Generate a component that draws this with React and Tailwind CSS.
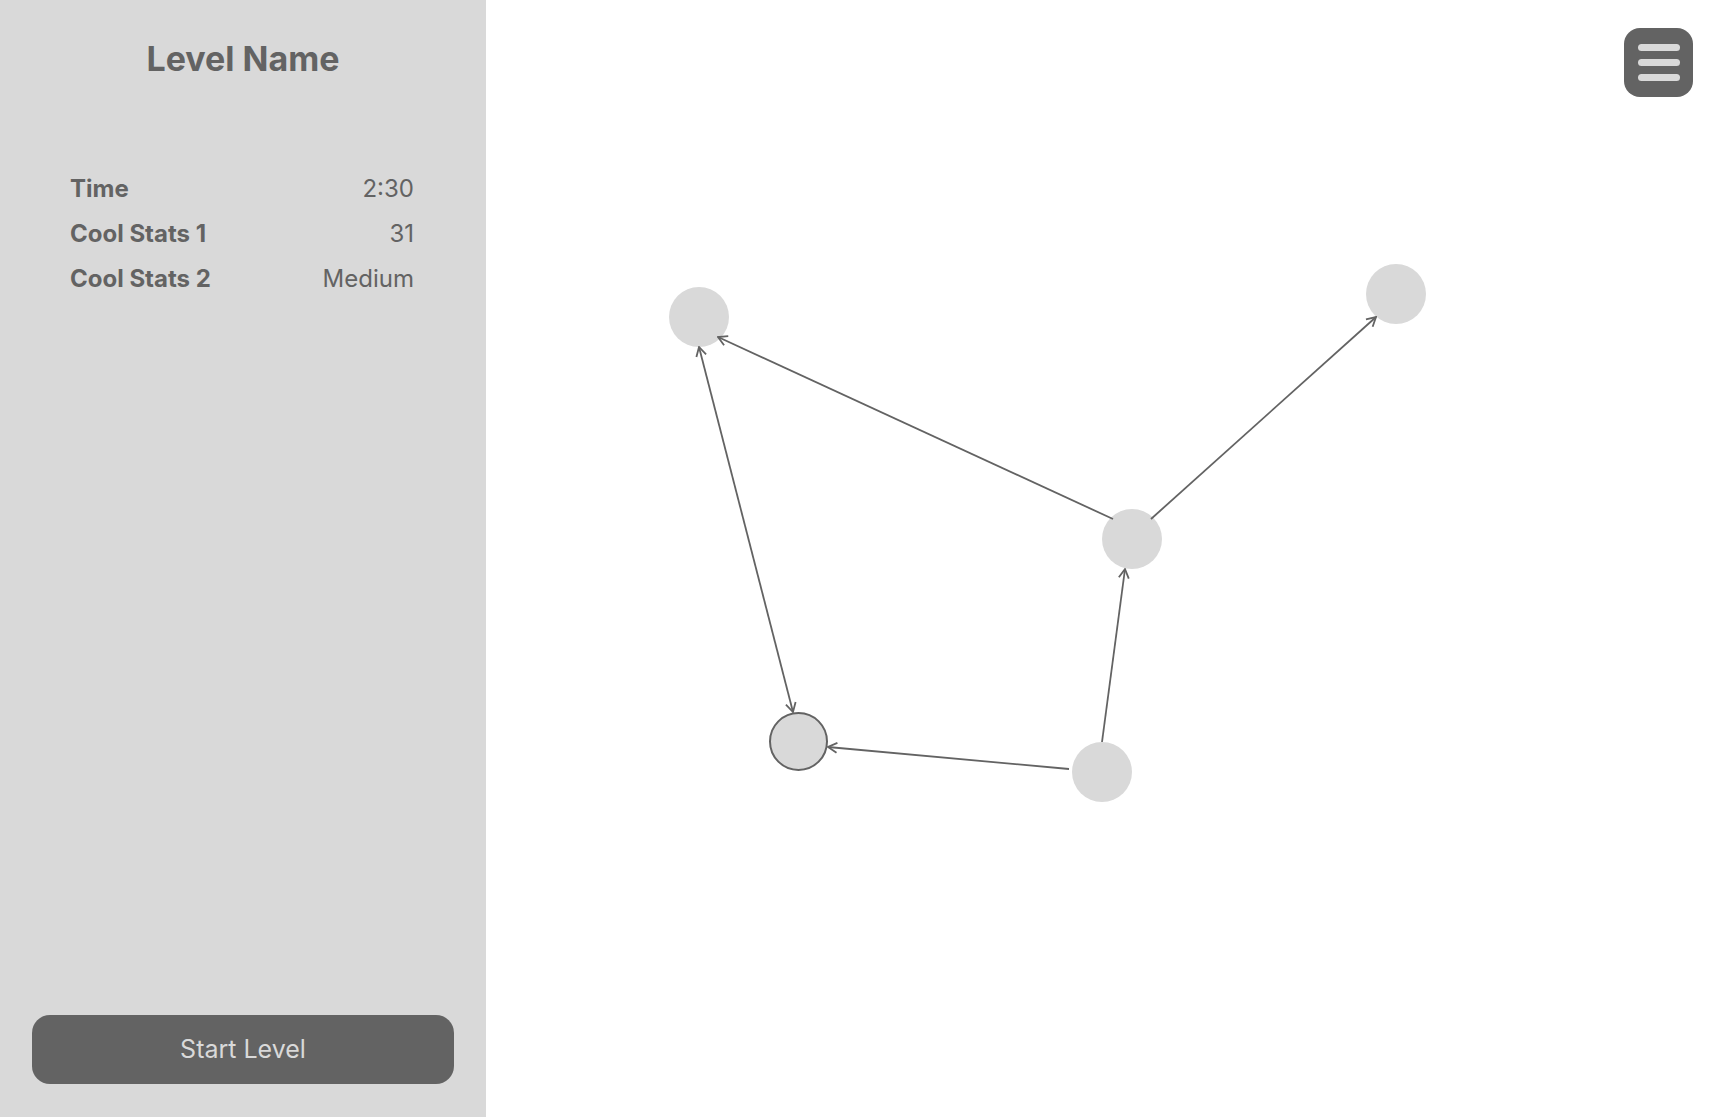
import React from "react";

const OFF = 486;
const nodes = [
  { x: 699, y: 317 },
  { x: 1396, y: 294 },
  { x: 1132, y: 539 },
  { x: 1102, y: 772 },
];
const edges = [
  { x1: 1113, y1: 519, x2: 718, y2: 337, both: false },
  { x1: 1151, y1: 519, x2: 1376, y2: 317, both: false },
  { x1: 1102, y1: 742, x2: 1125, y2: 569, both: false },
  { x1: 1069, y1: 769, x2: 828, y2: 747, both: false },
  { x1: 699, y1: 347, x2: 793, y2: 712, both: true },
];

function Stat({ label, value }) {
  return (
    <div className="flex items-center justify-between h-[45px] leading-[45px] text-[24px]">
      <span className="font-bold">{label}</span>
      <span className="font-normal">{value}</span>
    </div>
  );
}

export default function App() {
  return (
    <div className="flex w-[1728px] h-[1117px] overflow-hidden font-[Inter,sans-serif] text-[#636363] bg-white">
      <aside className="w-[486px] shrink-0 bg-[#d9d9d9] flex flex-col">
        <h1 className="mt-[43px] text-center text-[34px] leading-[32px] font-bold">Level Name</h1>
        <div className="mt-[91px] pl-[70px] pr-[72px] flex flex-col">
          <Stat label="Time" value="2:30" />
          <Stat label="Cool Stats 1" value="31" />
          <Stat label="Cool Stats 2" value="Medium" />
        </div>
        <div className="mt-auto mb-[33px] px-[32px]">
          <button className="w-full h-[69px] rounded-[18px] bg-[#636363] text-[#d9d9d9] text-[25px] font-normal flex items-center justify-center">
            Start Level
          </button>
        </div>
      </aside>
      <main className="relative flex-1">
        <svg
          className="absolute inset-0"
          width={1728 - OFF}
          height={1117}
          viewBox={`${OFF} 0 ${1728 - OFF} 1117`}
        >
          <defs>
            <marker
              id="arr"
              viewBox="0 0 12 12"
              refX="11"
              refY="6"
              markerWidth="12"
              markerHeight="12"
              markerUnits="userSpaceOnUse"
              orient="auto-start-reverse"
            >
              <path d="M2 1 L11 6 L2 11" fill="none" stroke="#636363" strokeWidth="1.8" />
            </marker>
          </defs>
          {nodes.map((n, i) => (
            <circle key={i} cx={n.x} cy={n.y} r="30" fill="#d9d9d9" />
          ))}
          <circle cx={798.5} cy={741.5} r="28.5" fill="#d9d9d9" stroke="#636363" strokeWidth="2" />
          {edges.map((e, i) => (
            <line
              key={i}
              x1={e.x1}
              y1={e.y1}
              x2={e.x2}
              y2={e.y2}
              stroke="#636363"
              strokeWidth="1.8"
              markerEnd="url(#arr)"
              markerStart={e.both ? "url(#arr)" : undefined}
            />
          ))}
        </svg>
        <button className="absolute top-[28px] right-[35px] w-[69px] h-[69px] rounded-[16px] bg-[#636363] flex flex-col items-center justify-center gap-[8px]">
          <span className="block w-[42px] h-[7px] rounded-full bg-[#d9d9d9]" />
          <span className="block w-[42px] h-[7px] rounded-full bg-[#d9d9d9]" />
          <span className="block w-[42px] h-[7px] rounded-full bg-[#d9d9d9]" />
        </button>
      </main>
    </div>
  );
}
